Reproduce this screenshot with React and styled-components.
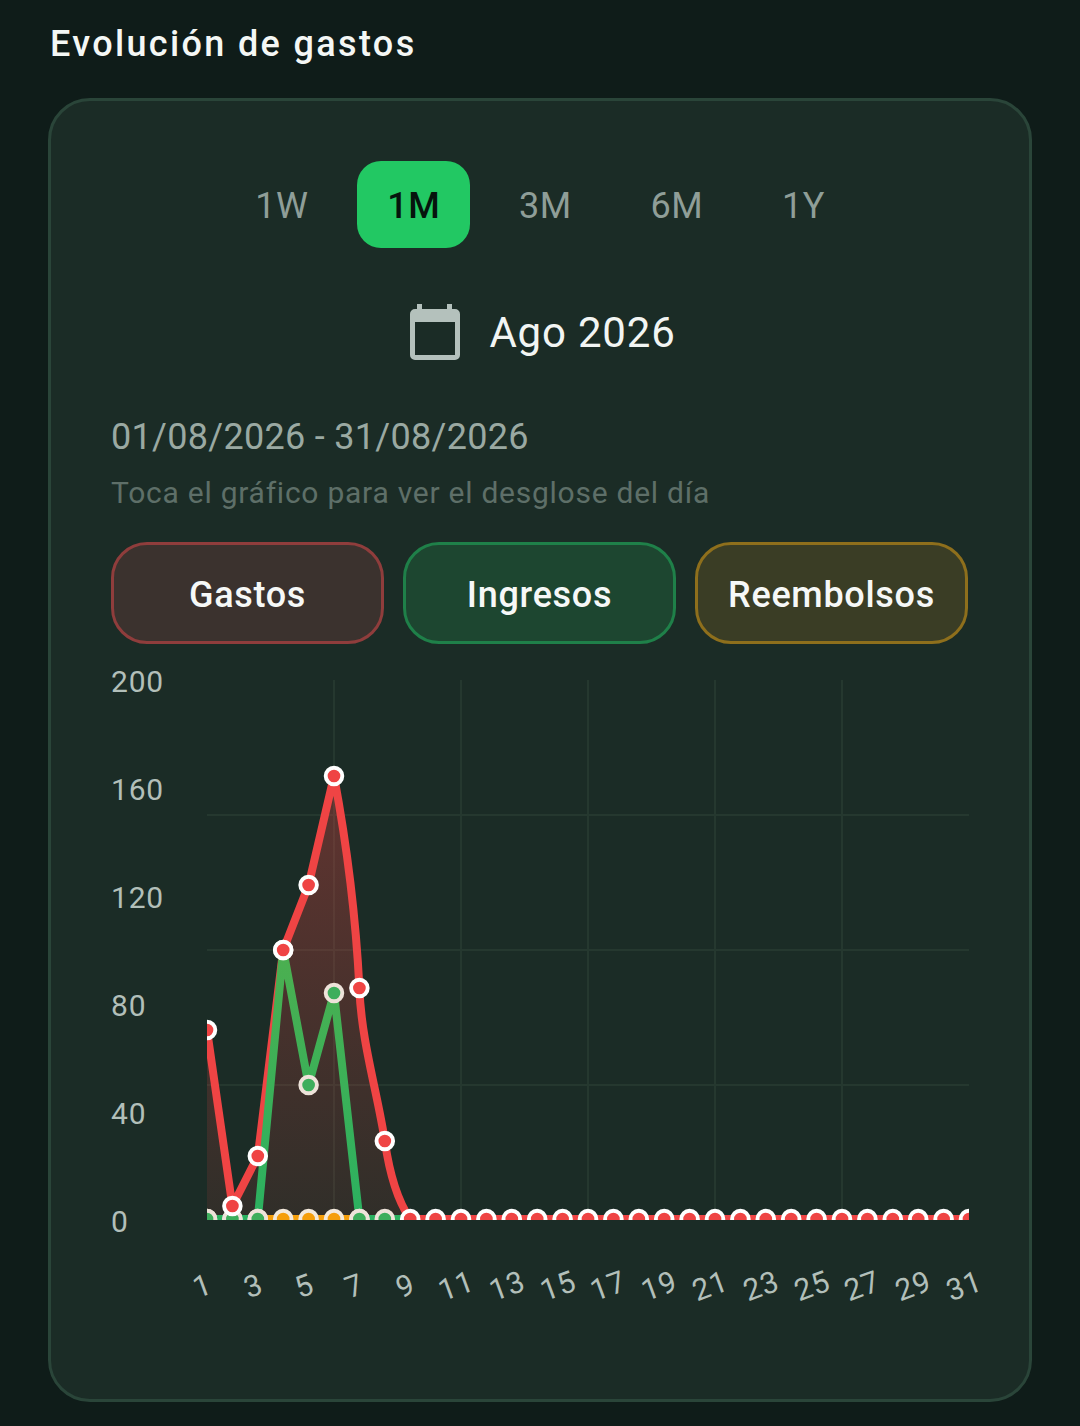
import React from 'react';
import styled, { createGlobalStyle } from 'styled-components';

const GlobalStyle = createGlobalStyle`
	html, body {
		margin: 0;
		padding: 0;
		background: #0f1c19;
	}
	body {
		font-family: Roboto, "Liberation Sans", sans-serif;
	}
`;

const Page = styled.div`
	width: 1080px;
	height: 1426px;
	overflow: hidden;
	box-sizing: border-box;
	padding: 22px 48px 0;
	background: #0f1c19;
`;

const Title = styled.h1`
	margin: 0 0 32px 2px;
	font-size: 36px;
	line-height: 44px;
	font-weight: 500;
	letter-spacing: 2.35px;
	color: #f4f7f5;
`;

const Card = styled.section`
	box-sizing: border-box;
	width: 984px;
	height: 1304px;
	padding: 60px 61px 0 61px;
	background: #1b2c26;
	border: 3px solid #2a4539;
	border-radius: 42px;
`;

const Tabs = styled.div`
	display: flex;
	justify-content: center;
	gap: 19px;
`;

const Tab = styled.div`
	height: 87px;
	padding: 2px 30px 0;
	box-sizing: border-box;
	display: flex;
	align-items: center;
	border-radius: 24px;
	font-size: 36px;
	font-weight: ${(p) => (p.$active ? 500 : 400)};
	letter-spacing: 0.4px;
	color: ${(p) => (p.$active ? '#06140d' : '#8f9e98')};
	background: ${(p) => (p.$active ? '#22c863' : 'transparent')};
`;

const DateRow = styled.div`
	display: flex;
	justify-content: center;
	align-items: center;
	gap: 29px;
	margin-top: 56px;
	height: 56px;
	padding-left: 6px;
`;

const DateText = styled.span`
	font-size: 42px;
	color: #f2f5f3;
	letter-spacing: 0.8px;
`;

const LeftEdge = styled.div`
	margin-left: -1px;
`;

const RangeText = styled.div`
	margin-top: 55px;
	font-size: 36px;
	line-height: 44px;
	color: #9aa9a2;
	letter-spacing: 0.3px;
`;

const Hint = styled.div`
	margin-top: 14px;
	font-size: 30px;
	line-height: 40px;
	color: #5e6f68;
	letter-spacing: 0.75px;
`;

const Legend = styled.div`
	display: grid;
	grid-template-columns: repeat(3, 273px);
	gap: 19px;
	margin-top: 29px;
`;

const legendColors = {
	red: { bg: '#3b322e', line: '#8f3d3c' },
	green: { bg: '#1d4630', line: '#1f8049' },
	amber: { bg: '#3a3d25', line: '#8e6f1c' },
};

const LegendButton = styled.div`
	box-sizing: border-box;
	height: 102px;
	padding-top: 3px;
	display: flex;
	align-items: center;
	justify-content: center;
	border-radius: 36px;
	border: 3px solid ${(p) => legendColors[p.$tone].line};
	background: ${(p) => legendColors[p.$tone].bg};
	color: #f6f8f7;
	font-size: 36px;
	font-weight: 500;
	letter-spacing: 0.7px;
`;

const ChartGrid = styled.div`
	display: grid;
	grid-template-columns: 95px 762px;
	margin-top: 36px;
`;

const YAxis = styled.div`
	height: 568px;
	margin: -12px 0 0 -1px;
	display: flex;
	flex-direction: column;
	justify-content: space-between;
	font-size: 30px;
	line-height: 28px;
	color: #b2bfb9;
	letter-spacing: 0.8px;
`;

const Plot = styled.svg`
	display: block;
`;

const XAxis = styled.div`
	display: flex;
	margin: 32px 0 0 65px;
`;

const XLabel = styled.span`
	flex: 0 0 50.8px;
	text-align: center;
	font-size: 30px;
	line-height: 36px;
	letter-spacing: 1px;
	color: #b2bfb9;
	transform: rotate(-20deg);
`;

const W = 762;
const H = 540;
const STEP = W / 30;
const BASE = 539;

// all coordinates are pixels inside the plot, read off the chart
const redLine =
	'M0 350L25.4 526L50.8 476L76.2 270L101.6 205L127 96C138 155 148 220 152.4 308C154 360 171 415 177.8 461C182 490 190 520 203.2 539L762 539';
const greenLine = 'M0 539L50.8 539L76.2 270L101.6 405L127 313L152.4 539L203.2 539';
const amberLine = 'M0 539L152.4 539';

const redY = [350, 526, 476, 270, 205, 96, 308, 461];
const greenY = [BASE, BASE, BASE, 270, 405, 313, BASE, BASE];

const spots = (ys, length) =>
	Array.from({ length }, (_, i) => ({
		x: i * STEP,
		y: i < ys.length ? ys[i] : BASE,
	}));

const redSpots = spots(redY, 31);
const greenSpots = spots(greenY, 8);
const amberSpots = spots([], 7);

const Dots = ({ points, fill, stroke }) =>
	points.map((p) => (
		<circle key={p.x} cx={p.x} cy={p.y} r="8.3" fill={fill} stroke={stroke} strokeWidth="3.9" />
	));

const Chart = () => (
	<Plot width={W} height={H} viewBox={`0 0 ${W} ${H}`}>
		<defs>
			<linearGradient id="redArea" x1="0" y1="0" x2="0" y2="1">
				<stop offset="0.15" stopColor="#ef4444" stopOpacity="0.3" />
				<stop offset="1" stopColor="#ef4444" stopOpacity="0.1" />
			</linearGradient>
			<linearGradient id="greenStroke" gradientUnits="userSpaceOnUse" x1="0" y1="270" x2="0" y2="540">
				<stop offset="0" stopColor="#4caf50" />
				<stop offset="1" stopColor="#2bb160" />
			</linearGradient>
		</defs>
		{[135, 270, 405].map((y) => (
			<line key={y} x1="0" x2={W} y1={y} y2={y} stroke="#25382f" strokeWidth="2" />
		))}
		{[127, 254, 381, 508, 635].map((x) => (
			<line key={x} x1={x} x2={x} y1="0" y2={H} stroke="#25382f" strokeWidth="2" />
		))}
		<path d={`${redLine}L${W} ${H}L0 ${H}Z`} fill="url(#redArea)" />
		<path d={redLine} fill="none" stroke="#ef4444" strokeWidth="8" />
		<path d={amberLine} fill="none" stroke="#f59e0b" strokeWidth="8" />
		<path d={greenLine} fill="none" stroke="url(#greenStroke)" strokeWidth="8" />
		<Dots points={amberSpots} fill="#f59e0b" stroke="#f3e9dc" />
		<Dots points={greenSpots} fill="#3dae5c" stroke="#eee3da" />
		<Dots points={redSpots} fill="#ef4444" stroke="#ffffff" />
	</Plot>
);

const CalendarIcon = () => (
	<svg width="50" height="56" viewBox="0 0 50 56">
		<path
			fill="#b4c1bc"
			fillRule="evenodd"
			d="M7 0h5v5h25V0h5v5h3a5 5 0 0 1 5 5v41a5 5 0 0 1-5 5H5a5 5 0 0 1-5-5V10a5 5 0 0 1 5-5h2V0zM5 18v33h40V18H5z"
		/>
	</svg>
);

const periods = ['1W', '1M', '3M', '6M', '1Y'];
const xLabels = Array.from({ length: 16 }, (_, i) => i * 2 + 1);

const App = () => (
	<Page>
		<GlobalStyle />
		<Title>Evolución de gastos</Title>
		<Card>
			<Tabs>
				{periods.map((period) => (
					<Tab key={period} $active={period === '1M'}>
						{period}
					</Tab>
				))}
			</Tabs>
			<DateRow>
				<CalendarIcon />
				<DateText>Ago 2026</DateText>
			</DateRow>
			<LeftEdge>
				<RangeText>01/08/2026 - 31/08/2026</RangeText>
				<Hint>Toca el gráfico para ver el desglose del día</Hint>
				<Legend>
					<LegendButton $tone="red">Gastos</LegendButton>
					<LegendButton $tone="green">Ingresos</LegendButton>
					<LegendButton $tone="amber">Reembolsos</LegendButton>
				</Legend>
			</LeftEdge>
			<ChartGrid>
				<YAxis>
					{[200, 160, 120, 80, 40, 0].map((v) => (
						<span key={v}>{v}</span>
					))}
				</YAxis>
				<Chart />
			</ChartGrid>
			<XAxis>
				{xLabels.map((v) => (
					<XLabel key={v}>{v}</XLabel>
				))}
			</XAxis>
		</Card>
	</Page>
);

export default App;
